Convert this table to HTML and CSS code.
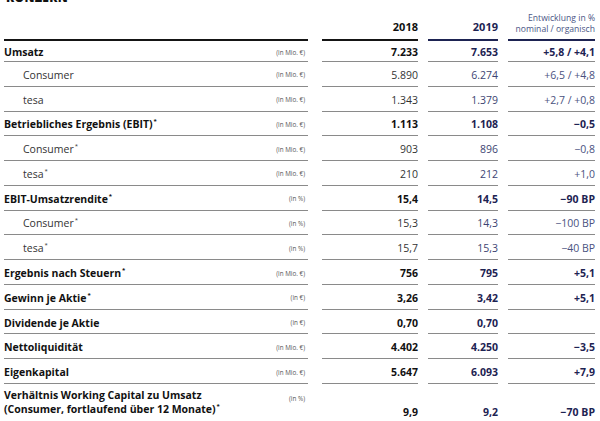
FILE: index.html
```html
<!DOCTYPE html>
<html lang="de">
<head>
<meta charset="utf-8">
<link rel="stylesheet" href="styles.css">
</head>
<body>
<h2 class="title">KONZERN</h2>
<div class="table">
  <div class="hcell"></div>
  <div class="hcell num y18">2018</div>
  <div class="hcell num y19">2019</div>
  <div class="hcell dev-h">Entwicklung in %<br>nominal / organisch</div>

  <div class="cell label bold"><span>Umsatz</span><span class="unit">(in Mio. €)</span></div>
  <div class="cell num bold">7.233</div>
  <div class="cell num bold y19">7.653</div>
  <div class="cell num bold dv">+5,8 / +4,1</div>

  <div class="cell label sub"><span>Consumer</span><span class="unit">(in Mio. €)</span></div>
  <div class="cell num lt">5.890</div>
  <div class="cell num lt19">6.274</div>
  <div class="cell num ltdv">+6,5 / +4,8</div>

  <div class="cell label sub"><span>tesa</span><span class="unit">(in Mio. €)</span></div>
  <div class="cell num lt">1.343</div>
  <div class="cell num lt19">1.379</div>
  <div class="cell num ltdv">+2,7 / +0,8</div>

  <div class="cell label bold"><span>Betriebliches Ergebnis (EBIT)<sup>*</sup></span><span class="unit">(in Mio. €)</span></div>
  <div class="cell num bold">1.113</div>
  <div class="cell num bold y19">1.108</div>
  <div class="cell num bold dv">−0,5</div>

  <div class="cell label sub"><span>Consumer<sup>*</sup></span><span class="unit">(in Mio. €)</span></div>
  <div class="cell num lt">903</div>
  <div class="cell num lt19">896</div>
  <div class="cell num ltdv">−0,8</div>

  <div class="cell label sub"><span>tesa<sup>*</sup></span><span class="unit">(in Mio. €)</span></div>
  <div class="cell num lt">210</div>
  <div class="cell num lt19">212</div>
  <div class="cell num ltdv">+1,0</div>

  <div class="cell label bold"><span>EBIT-Umsatzrendite<sup>*</sup></span><span class="unit">(in %)</span></div>
  <div class="cell num bold">15,4</div>
  <div class="cell num bold y19">14,5</div>
  <div class="cell num bold dv">−90 BP</div>

  <div class="cell label sub"><span>Consumer<sup>*</sup></span><span class="unit">(in %)</span></div>
  <div class="cell num lt">15,3</div>
  <div class="cell num lt19">14,3</div>
  <div class="cell num ltdv">−100 BP</div>

  <div class="cell label sub"><span>tesa<sup>*</sup></span><span class="unit">(in %)</span></div>
  <div class="cell num lt">15,7</div>
  <div class="cell num lt19">15,3</div>
  <div class="cell num ltdv">−40 BP</div>

  <div class="cell label bold"><span>Ergebnis nach Steuern<sup>*</sup></span><span class="unit">(in Mio. €)</span></div>
  <div class="cell num bold">756</div>
  <div class="cell num bold y19">795</div>
  <div class="cell num bold dv">+5,1</div>

  <div class="cell label bold"><span>Gewinn je Aktie<sup>*</sup></span><span class="unit">(in €)</span></div>
  <div class="cell num bold">3,26</div>
  <div class="cell num bold y19">3,42</div>
  <div class="cell num bold dv">+5,1</div>

  <div class="cell label bold"><span>Dividende je Aktie</span><span class="unit">(in €)</span></div>
  <div class="cell num bold">0,70</div>
  <div class="cell num bold y19">0,70</div>
  <div class="cell num bold dv"></div>

  <div class="cell label bold"><span>Nettoliquidität</span><span class="unit">(in Mio. €)</span></div>
  <div class="cell num bold">4.402</div>
  <div class="cell num bold y19">4.250</div>
  <div class="cell num bold dv">−3,5</div>

  <div class="cell label bold"><span>Eigenkapital</span><span class="unit">(in Mio. €)</span></div>
  <div class="cell num bold">5.647</div>
  <div class="cell num bold y19">6.093</div>
  <div class="cell num bold dv">+7,9</div>

  <div class="cell label bold last"><span>Verhältnis Working Capital zu Umsatz<br>(Consumer, fortlaufend über 12 Monate)<sup>*</sup></span><span class="unit">(in %)</span></div>
  <div class="cell num bold last">9,9</div>
  <div class="cell num bold y19 last">9,2</div>
  <div class="cell num bold dv last">−70 BP</div>
</div>
</body>
</html>
```

FILE: styles.css
```css
html, body {
  margin: 0;
  padding: 0;
  background: #fff;
}
body {
  padding: 0 5px 0 4px;
  font-family: "Open Sans", "DejaVu Sans", sans-serif;
  color: #1a1a1a;
  overflow: hidden;
  height: 421px;
}
.title {
  margin: -9px 0 0 2px;
  font-size: 12px;
  font-weight: 800;
  line-height: 14px;
  letter-spacing: 0.3px;
  color: #111;
}
.table {
  display: grid;
  grid-template-columns: 304px 14px 96px 10px 70px 10px 87px;
  grid-template-rows: 36px 21px repeat(13, 24.77px) auto;
  margin-top: 0;
}
.table > div:nth-child(4n+1) { grid-column: 1; }
.table > div:nth-child(4n+2) { grid-column: 3; }
.table > div:nth-child(4n+3) { grid-column: 5; }
.table > div:nth-child(4n+4) { grid-column: 7; }

.hcell {
  border-bottom: 2px solid #151515;
  display: flex;
  align-items: flex-end;
  justify-content: flex-end;
  padding-bottom: 5px;
  box-sizing: border-box;
}
.hcell.num {
  font-size: 11px;
  font-weight: 700;
  color: #111;
}
.hcell.y19 { color: #1d2352; border-bottom-color: #1d2352; }
.hcell.dev-h {
  border-bottom-color: #1d2352;
  font-size: 8.6px;
  line-height: 11px;
  text-align: right;
  color: #4a5585;
  padding-bottom: 4px;
}
.cell {
  box-sizing: border-box;
  border-bottom: 1.5px solid #8a8a8a;
  display: flex;
  align-items: center;
  padding-top: 2px;
  font-size: 10.5px;
  white-space: nowrap;
}
.cell.label {
  justify-content: space-between;
}
.cell.num {
  justify-content: flex-end;
}
.bold { font-weight: 700; color: #111; }
.cell.sub { padding-left: 19px; font-weight: 400; color: #333; }
.y19 { color: #1d2352; }
.dv { color: #1d2352; }
.lt { color: #333; font-weight: 400; }
.lt19 { color: #3d4472; font-weight: 400; }
.ltdv { color: #4a5280; font-weight: 400; }
.unit {
  font-size: 6.3px;
  font-weight: 400;
  color: #555;
  padding-right: 3px;
}
sup {
  font-size: 6px;
  line-height: 0;
  vertical-align: 5px;
  margin-left: 1px;
}
.cell.last {
  border-bottom: none;
  height: 40px;
  align-items: flex-end;
  padding-bottom: 5px;
  line-height: 14px;
}
.cell.label.last {
  align-items: flex-start;
  padding-top: 4px;
}
.cell.label.last .unit { padding-top: 4px; }
```
